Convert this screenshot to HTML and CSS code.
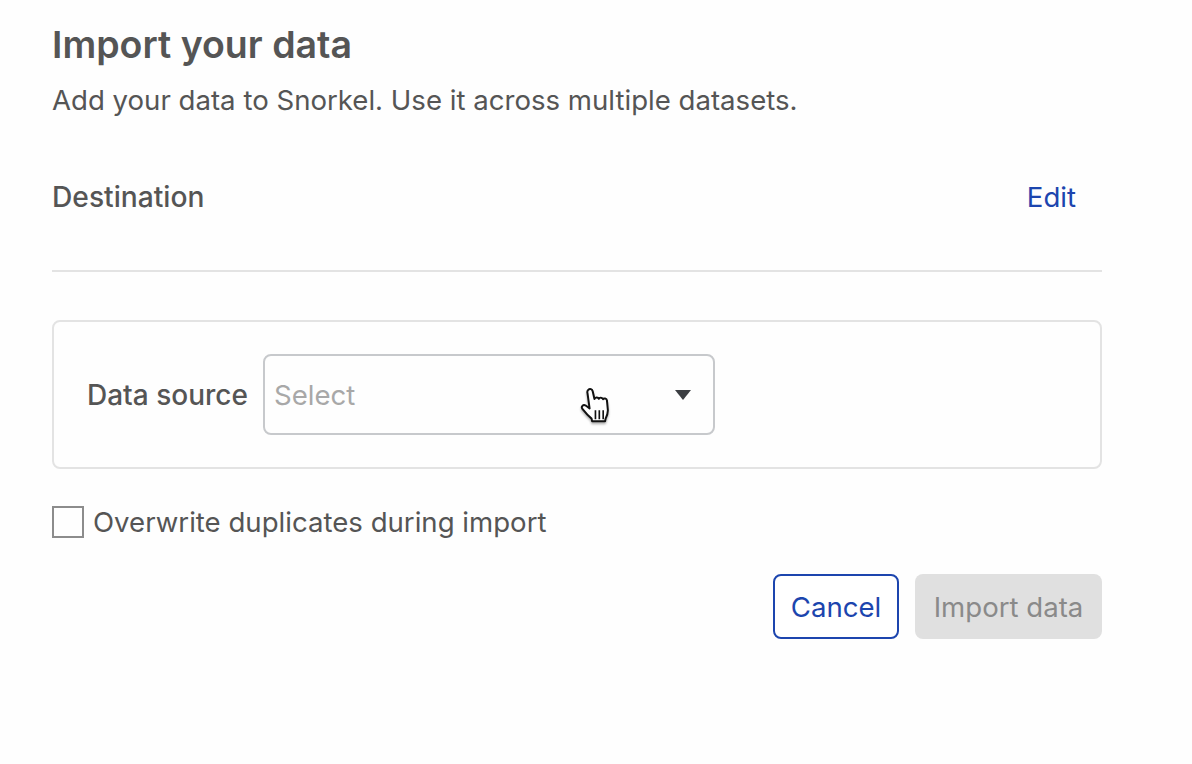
FILE: index.html
```html
<!DOCTYPE html>
<html lang="en">
<head>
  <meta charset="UTF-8">
  <title>Import your data</title>
  <link rel="stylesheet" href="styles.css">
</head>
<body>
  <div class="import-form">
    <h1>Import your data</h1>
    <p class="subtitle">Add your data to Snorkel. Use it across multiple datasets.</p>

    <div class="destination">
      <span class="destination-label">Destination</span>
      <a class="edit-link">Edit</a>
    </div>

    <!-- Data source picker -->
    <div class="source-card">
      <label class="source-label">Data source</label>
      <div class="select">
        <span class="select-placeholder">Select</span>
        <svg class="select-arrow" width="16" height="10" viewBox="0 0 16 10"><path d="M0 0H16L8 10Z" fill="#3b3e42"/></svg>
        <svg class="hand-cursor" width="36" height="42" viewBox="0 0 32 38">
          <path d="M9 3.5c1.5-1.5 3.600-.6 4 1.300l1.600 7c.3-1.800 3.400-2 4-.2.3-1.500 3.300-1.500 3.800.4.700-1.200 3.200-.9 3.500 1l.8 8.500c.2 3-.8 5.500-2 8l-.5 2.500H12.500l-.5-2.500c-2.500-2-6.500-6.500-8.300-8.800-1.500-2 .6-4.400 3-3l3.500 2.600L8.300 6.500C8 5.500 8.300 4.200 9 3.500Z" fill="#fff" stroke="#111" stroke-width="1.800" stroke-linejoin="round"/>
          <path d="M15.500 22v8M19 22v8M22.500 22v8" stroke="#111" stroke-width="1.500" fill="none"/>
        </svg>
      </div>
    </div>

    <label class="overwrite">
      <span class="checkbox"></span>
      <span>Overwrite duplicates during import</span>
    </label>

    <div class="actions">
      <button class="btn btn-cancel" type="button">Cancel</button>
      <button class="btn btn-import" type="button" disabled>Import data</button>
    </div>
  </div>
</body>
</html>
```

FILE: styles.css
```css
body {
  margin: 0;
  background-color: #fefefe;
  color: #555;
  font-family: Inter, "Noto Sans", sans-serif;
}

.import-form {
  width: 1050px;
  padding: 22px 0 0 52px;
}

h1 {
  margin: 0;
  font-size: 37.500px;
  line-height: 46px;
  font-weight: 600;
}

.subtitle {
  margin: 16px 0 0;
  font-size: 27.600px;
  line-height: 32px;
}

.destination {
  display: flex;
  justify-content: space-between;
  align-items: center;
  height: 32px;
  margin-top: 65px;
  padding-bottom: 57px;
  border-bottom: 2px solid #e3e3e3;
  font-size: 27.600px;
}

.destination-label {
  font-size: 28.200px;
  font-weight: 500;
}

.edit-link {
  margin-right: 26px;
  color: #1c45ae;
}

.source-card {
  display: flex;
  align-items: center;
  height: 145px;
  margin-top: 48px;
  padding-left: 33px;
  border: 2px solid #e3e3e3;
  border-radius: 8px;
}

.source-label {
  width: 176px;
  font-size: 28px;
  font-weight: 500;
}

.select {
  position: relative;
  display: flex;
  justify-content: space-between;
  align-items: center;
  box-sizing: border-box;
  width: 452px;
  height: 81px;
  padding: 0 22px 0 9px;
  border: 2px solid #c7c9cc;
  border-radius: 8px;
  font-size: 27.600px;
}

.select-placeholder {
  color: #a8a8a8;
}

/* Mouse pointer caught in the screenshot */
.hand-cursor {
  position: absolute;
  left: 313px;
  top: 30px;
  filter: drop-shadow(0 2px 1px rgba(0, 0, 0, 0.3));
}

.overwrite {
  display: flex;
  align-items: center;
  margin-top: 36px;
  font-size: 27.600px;
}

.checkbox {
  box-sizing: border-box;
  width: 32px;
  height: 32px;
  margin-right: 9px;
  border: 2px solid #8c8c8c;
}

.actions {
  display: flex;
  justify-content: flex-end;
  gap: 16px;
  margin-top: 35px;
}

.btn {
  height: 65px;
  border-radius: 8px;
  font-family: inherit;
  font-size: 27.600px;
}

.btn-cancel {
  width: 126px;
  border: 2px solid #1c45ae;
  background-color: #fff;
  color: #1c45ae;
}

.btn-import {
  width: 187px;
  border: none;
  background-color: #e0e0e0;
  color: #8a8a8a;
}
```
